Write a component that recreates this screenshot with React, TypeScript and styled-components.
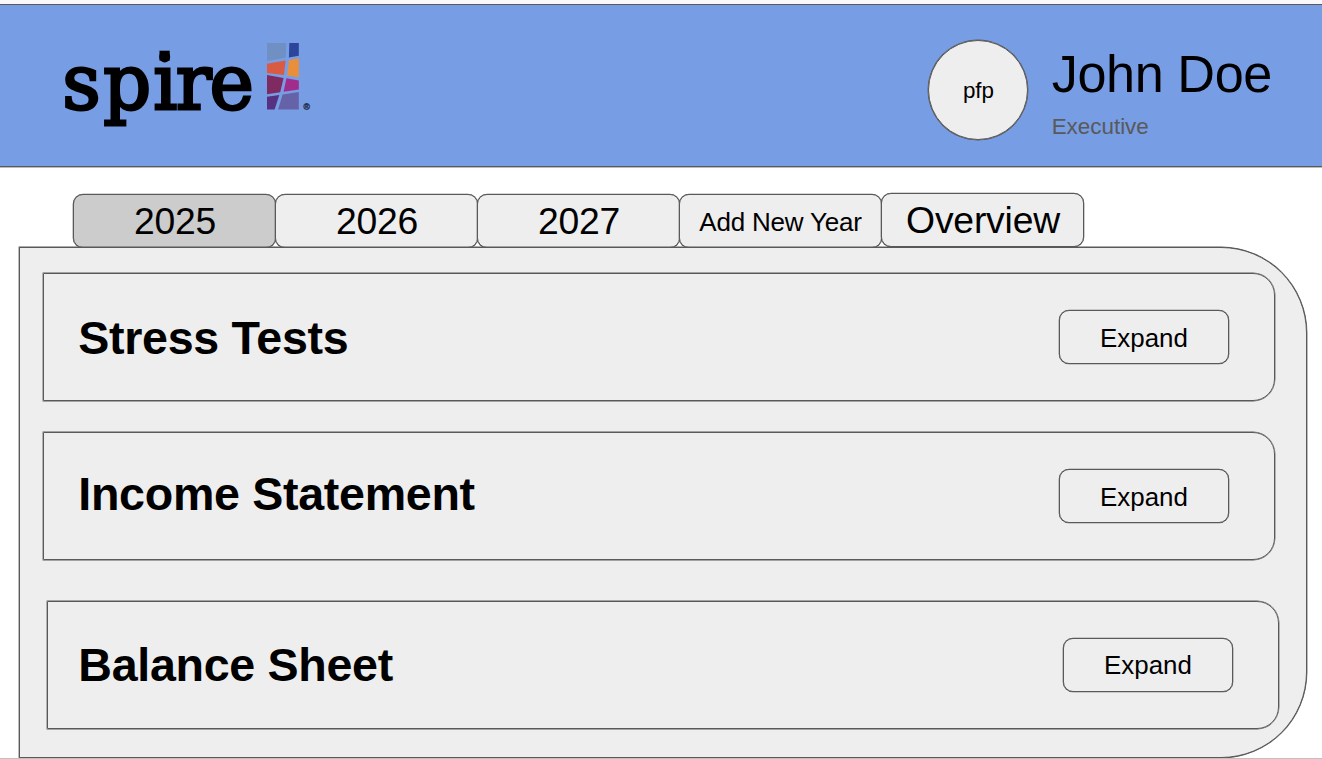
import React from "react";
import styled, { createGlobalStyle } from "styled-components";

const line = "#595959";
const surface = "#eeeeee";

const GlobalStyle = createGlobalStyle`
  *, *::before, *::after { box-sizing: border-box; }
  body {
    margin: 0;
    background: #ffffff;
    color: #000000;
    font-family: "Liberation Sans", Arial, sans-serif;
  }
  button { font-family: inherit; color: inherit; padding: 0; margin: 0; }
`;

const Page = styled.div`
  width: 1322px;
  height: 759px;
  overflow: hidden;
  display: flex;
  flex-direction: column;
  border-top: 4px solid #f9f9f9;
  border-bottom: 1px solid #c0c0c0;
`;

const Header = styled.header`
  flex: none;
  height: 163px;
  display: flex;
  justify-content: space-between;
  align-items: flex-start;
  padding: 25px 50px 0 60px;
  background: #779de4;
  border: solid ${line};
  border-width: 1px 0;
  box-shadow: 0 0 0 0.4px ${line};
`;

const Logo = styled.svg`
  display: block;
  overflow: visible;
`;

const Profile = styled.div`
  display: flex;
  align-items: flex-start;
  gap: 23px;
  margin-top: 10px;
`;

const Avatar = styled.div`
  width: 100px;
  height: 100px;
  border-radius: 50%;
  display: flex;
  align-items: center;
  justify-content: center;
  padding: 2px 0 0 1px;
  background: ${surface};
  border: 1px solid ${line};
  box-shadow: 0 0 0 0.4px ${line};
  font-size: 22.4px;
`;

const Person = styled.div`
  display: flex;
  flex-direction: column;
  width: 221px;
  padding-left: 0.7px;
  white-space: nowrap;
`;

const Name = styled.div`
  font-size: 52.2px;
  line-height: 60px;
  margin-top: 4px;
  letter-spacing: -0.4px;
`;

const Role = styled.div`
  font-size: 22.4px;
  line-height: 26px;
  margin-top: 10px;
  color: ${line};
`;

const Tabs = styled.nav`
  flex: none;
  display: flex;
  margin: 27px 0 0 73px;
`;

const Tab = styled.button<{ $active?: boolean; $small?: boolean; $raised?: boolean }>`
  width: 203px;
  height: 54px;
  margin-right: -1px;
  margin-top: ${(p) => (p.$raised ? "-1px" : "0")};
  padding: ${(p) => (p.$small ? "2px 0 0" : "0 0 0 1px")};
  border: 1px solid ${line};
  border-radius: 10px;
  box-shadow: 0 0 0 0.3px ${line};
  background: ${(p) => (p.$active ? "#cccccc" : surface)};
  font-size: ${(p) => (p.$small ? "26px" : "37.3px")};
  letter-spacing: -0.2px;
`;

const Panel = styled.main`
  flex: none;
  width: 1288px;
  height: 511px;
  margin: -1px 0 0 19px;
  padding: 25px 0 0 23px;
  background: ${surface};
  border: 1px solid ${line};
  border-radius: 0 86px 86px 0;
  box-shadow: 0 0 0 0.4px ${line};
`;

const Card = styled.section<{ $gap?: number; $indent?: number }>`
  width: 1232px;
  height: 128px;
  margin-top: ${(p) => p.$gap ?? 0}px;
  margin-left: ${(p) => p.$indent ?? 0}px;
  padding: 0 45px 0 ${(p) => 34.3 - (p.$indent ?? 0)}px;
  display: flex;
  align-items: center;
  justify-content: space-between;
  border: 1px solid ${line};
  border-radius: 0 22px 22px 0;
  box-shadow: 0 0 0 0.4px ${line};
`;

const Title = styled.h2<{ $lift?: number }>`
  margin: 0 0 ${(p) => p.$lift ?? 0}px;
  font-size: 46.6px;
  line-height: 54px;
  font-weight: 700;
  letter-spacing: -0.3px;
`;

const ExpandButton = styled.button<{ $labelDrop?: number }>`
  width: 170px;
  height: 54px;
  padding-top: ${(p) => p.$labelDrop ?? 2}px;
  border: 1px solid ${line};
  border-radius: 10px;
  box-shadow: 0 0 0 0.3px ${line};
  background: ${surface};
  font-size: 25.9px;
`;

const SpireLogo = () => (
  <Logo width="256" height="106" viewBox="60 30 256 106" role="img" aria-label="spire">
    <g transform="scale(0.98 1)">
      <text
        x="63.400 105.400 156.400 179.400 213.800"
        y="108.600"
        fontFamily="'DejaVu Serif', serif"
        fontSize="76.500"
        stroke="#000"
        strokeWidth="2.800"
      >
        spire
      </text>
    </g>
    <path d="M159.500 50.700h10.200v10h-10.200z" fill="#000" />
    <path d="M267 43h19.300l-.6 14.800L267 61z" fill="#7090c4" />
    <path d="M289.300 43h9.500v12.800l-9.900 1.600z" fill="#2c459b" />
    <path d="M267 63.700l18.600-3.100-1.600 14.500-17-2.200z" fill="#d95b43" />
    <path d="M289 60l9.800-1.700v19l-11.600-1.800z" fill="#e98f3c" />
    <path d="M267 75l16.600 2.900-3.400 14.300-13.200 2.100z" fill="#802a62" />
    <path d="M286.400 78.200l12.400 2.200v9.200l-15.200 2.200z" fill="#a02d8b" />
    <path d="M267 96.800l12.300-1.700-4.700 14.500H267z" fill="#563181" />
    <path d="M282.600 94.400l16.200-2.500v17.700h-20.700z" fill="#6662a8" />
    <text x="303.400" y="109.600" fontFamily="'Liberation Sans', sans-serif" fontWeight="700" fontSize="8.500" fill="#24334f" stroke="#24334f" strokeWidth="0.4">
      ®
    </text>
  </Logo>
);

export default function App() {
  return (
    <>
      <GlobalStyle />
      <Page>
        <Header>
          <SpireLogo />
          <Profile>
            <Avatar>pfp</Avatar>
            <Person>
              <Name>John Doe</Name>
              <Role>Executive</Role>
            </Person>
          </Profile>
        </Header>
        <Tabs>
          <Tab $active>2025</Tab>
          <Tab>2026</Tab>
          <Tab>2027</Tab>
          <Tab $small>Add New Year</Tab>
          <Tab $raised>Overview</Tab>
        </Tabs>
        <Panel>
          <Card>
            <Title $lift={-2}>Stress Tests</Title>
            <ExpandButton>Expand</ExpandButton>
          </Card>
          <Card $gap={31}>
            <Title $lift={5}>Income Statement</Title>
            <ExpandButton>Expand</ExpandButton>
          </Card>
          <Card $gap={41} $indent={4}>
            <Title>Balance Sheet</Title>
            <ExpandButton $labelDrop={0}>Expand</ExpandButton>
          </Card>
        </Panel>
      </Page>
    </>
  );
}
